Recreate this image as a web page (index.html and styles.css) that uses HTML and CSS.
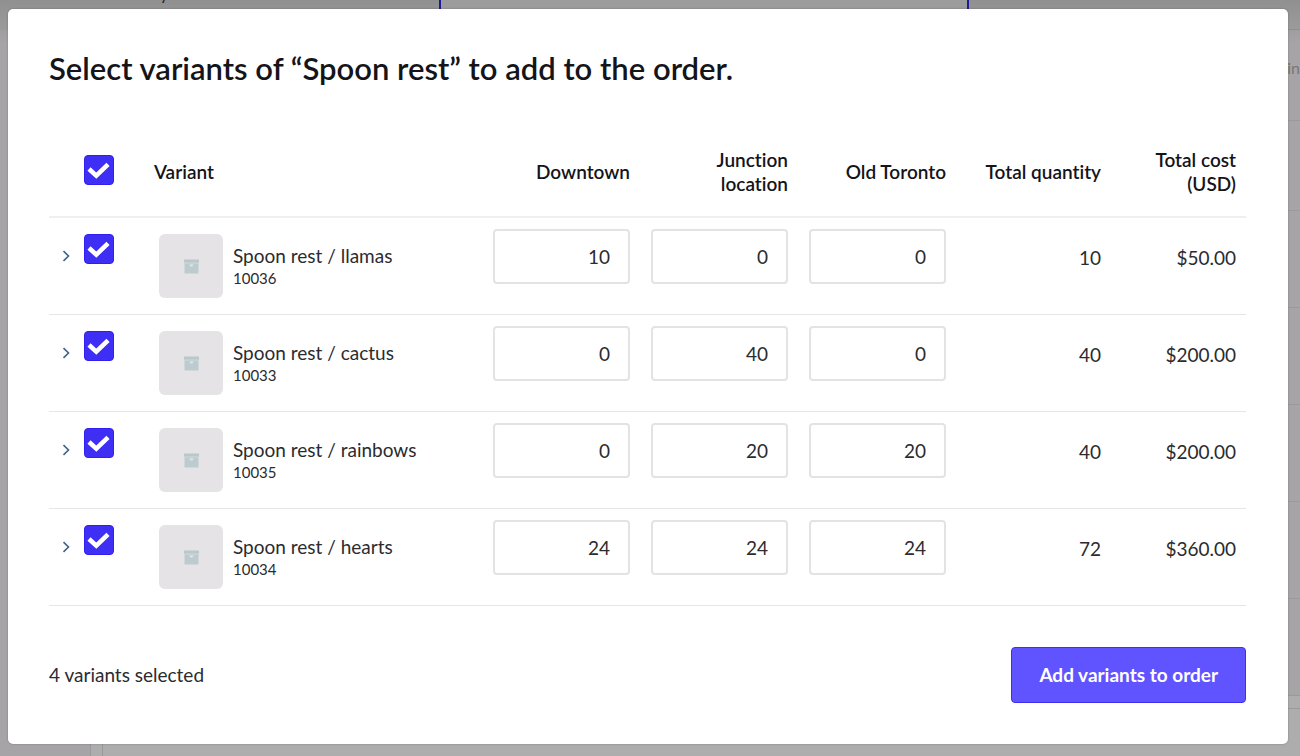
FILE: index.html
```
<!DOCTYPE html>
<html lang="en">
<head>
  <meta charset="UTF-8">
  <meta name="viewport" content="width=device-width, initial-scale=1.0">
  <title>Select variants</title>
  <link rel="stylesheet" href="styles.css">
</head>
<body>
  <!-- dimmed page behind the dialog -->
  <div class="page" aria-hidden="true">
    <div class="page-top">
      <div class="page-top-side"><span>y</span></div>
      <div class="page-top-main"></div>
      <div class="page-top-side"></div>
    </div>
    <div class="page-body">
      <div class="page-nav"></div>
      <div class="page-content">
        <div class="page-rows">
          <div class="page-row">in</div>
          <div class="page-row"></div>
          <div class="page-row"></div>
          <div class="page-row"></div>
          <div class="page-row"></div>
          <div class="page-row"></div>
          <div class="page-row"></div>
        </div>
        <div class="page-panel"></div>
      </div>
    </div>
  </div>

  <svg class="icons" width="0" height="0">
    <symbol id="chevron" viewBox="0 0 8 12">
      <path d="M1.5 1.2 6.5 6 1.5 10.8" fill="none" stroke="#3f6287" stroke-width="1.6"/>
    </symbol>
    <symbol id="box" viewBox="0 0 15 15">
      <path d="M0 .5h15v3.2H0z" fill="#b9c8cc"/>
      <path d="M.5 4.3h14V14.5H.5z" fill="#bccbce"/>
      <path d="M5.5 5.6h4v1h-1v.8h-2v-.8h-1z" fill="#e4e7ea"/>
    </symbol>
  </svg>

  <form class="modal" role="dialog" aria-labelledby="modal-title">
    <h1 id="modal-title">Select variants of “Spoon rest” to add to the order.</h1>

    <table class="variants">
      <colgroup>
        <col class="col-toggle">
        <col class="col-check">
        <col>
        <col class="col-location">
        <col class="col-location">
        <col class="col-location">
        <col class="col-quantity">
        <col class="col-cost">
      </colgroup>
      <thead>
        <tr>
          <td></td>
          <td class="check"><input type="checkbox" aria-label="Select all variants" checked></td>
          <th class="variant-head" scope="col">Variant</th>
          <th scope="col">Downtown</th>
          <th scope="col">Junction location</th>
          <th scope="col">Old Toronto</th>
          <th scope="col">Total quantity</th>
          <th scope="col">Total cost (USD)</th>
        </tr>
      </thead>
      <tbody>
        <tr>
          <td class="toggle"><button type="button" aria-label="Expand llamas"><svg><use href="#chevron"/></svg></button></td>
          <td class="check"><input type="checkbox" id="v-10036" checked></td>
          <td>
            <label class="variant" for="v-10036">
              <span class="thumb"><svg><use href="#box"/></svg></span>
              <span class="info"><span class="name">Spoon rest / llamas</span><span class="sku">10036</span></span>
            </label>
          </td>
          <td class="qty"><input type="text" aria-label="Llamas, Downtown" value="10"></td>
          <td class="qty"><input type="text" aria-label="Llamas, Junction location" value="0"></td>
          <td class="qty"><input type="text" aria-label="Llamas, Old Toronto" value="0"></td>
          <td class="total">10</td>
          <td class="total">$50.00</td>
        </tr>
        <tr>
          <td class="toggle"><button type="button" aria-label="Expand cactus"><svg><use href="#chevron"/></svg></button></td>
          <td class="check"><input type="checkbox" id="v-10033" checked></td>
          <td>
            <label class="variant" for="v-10033">
              <span class="thumb"><svg><use href="#box"/></svg></span>
              <span class="info"><span class="name">Spoon rest / cactus</span><span class="sku">10033</span></span>
            </label>
          </td>
          <td class="qty"><input type="text" aria-label="Cactus, Downtown" value="0"></td>
          <td class="qty"><input type="text" aria-label="Cactus, Junction location" value="40"></td>
          <td class="qty"><input type="text" aria-label="Cactus, Old Toronto" value="0"></td>
          <td class="total">40</td>
          <td class="total">$200.00</td>
        </tr>
        <tr>
          <td class="toggle"><button type="button" aria-label="Expand rainbows"><svg><use href="#chevron"/></svg></button></td>
          <td class="check"><input type="checkbox" id="v-10035" checked></td>
          <td>
            <label class="variant" for="v-10035">
              <span class="thumb"><svg><use href="#box"/></svg></span>
              <span class="info"><span class="name">Spoon rest / rainbows</span><span class="sku">10035</span></span>
            </label>
          </td>
          <td class="qty"><input type="text" aria-label="Rainbows, Downtown" value="0"></td>
          <td class="qty"><input type="text" aria-label="Rainbows, Junction location" value="20"></td>
          <td class="qty"><input type="text" aria-label="Rainbows, Old Toronto" value="20"></td>
          <td class="total">40</td>
          <td class="total">$200.00</td>
        </tr>
        <tr>
          <td class="toggle"><button type="button" aria-label="Expand hearts"><svg><use href="#chevron"/></svg></button></td>
          <td class="check"><input type="checkbox" id="v-10034" checked></td>
          <td>
            <label class="variant" for="v-10034">
              <span class="thumb"><svg><use href="#box"/></svg></span>
              <span class="info"><span class="name">Spoon rest / hearts</span><span class="sku">10034</span></span>
            </label>
          </td>
          <td class="qty"><input type="text" aria-label="Hearts, Downtown" value="24"></td>
          <td class="qty"><input type="text" aria-label="Hearts, Junction location" value="24"></td>
          <td class="qty"><input type="text" aria-label="Hearts, Old Toronto" value="24"></td>
          <td class="total">72</td>
          <td class="total">$360.00</td>
        </tr>
      </tbody>
    </table>

    <div class="footer">
      <span>4 variants selected</span>
      <button class="submit" type="submit">Add variants to order</button>
    </div>
  </form>
</body>
</html>
```
FILE: styles.css
```
* {
  box-sizing: border-box;
}
body {
  margin: 0;
  min-height: 100vh;
  display: grid;
  background: #a6a4a6;
  color: #2b2b30;
  font-family: Lato, sans-serif;
  font-size: 19px;
  font-variant-ligatures: none;
  line-height: 24px;
}
.page, .modal {
  grid-area: 1 / 1;
}

/* page behind */
.page {
  display: flex;
  flex-direction: column;
  background: linear-gradient(#919191, #a6a4a6 44px);
}
.page-top {
  display: flex;
  height: 30px;
}
.page-top-side {
  flex: 440;
  overflow: hidden;
  background: linear-gradient(#909090, #9b9b9b);
}
.page-top-side span {
  display: block;
  margin: -18px 0 0 160px;
  color: #222;
  font-size: 16px;
}
.page-top-side:last-child {
  flex: 332;
  border-bottom: 1px solid #8f8f8f;
}
.page-top-main {
  flex: 528;
  border: solid #1a1a9c;
  border-width: 0 2px;
  background: #9c9c9c;
}
.page-body {
  flex: 1;
  display: flex;
}
.page-nav {
  width: 103px;
  border-right: 1px solid #999;
  background: linear-gradient(90deg, transparent 90px, #999 90px, #999 91px, #adadad 91px);
}
.page-content {
  flex: 1;
  display: flex;
  flex-direction: column;
}
.page-row {
  height: 97px;
  border-bottom: 1px solid #9b999b;
}
.page-row:first-child {
  height: 91px;
  padding-top: 26px;
  color: #777;
  font-size: 16px;
  text-align: right;
}
.page-row:nth-child(2) {
  height: 90px;
}
.page-panel {
  flex: 1;
  border-top: 12px solid #adadad;
  background: #adadad;
  box-shadow: inset 0 1px #999;
}

/* dialog */
.icons {
  display: none;
}
.modal {
  align-self: start;
  margin: 9px 12px 12px 8px;
  padding: 39px 42px 41px 41px;
  background: #fff;
  border-radius: 5px;
  box-shadow: 0 0 2px rgba(0, 0, 0, 0.3);
}
h1 {
  margin: 0 0 40px;
  color: #141419;
  font-size: 31px;
  font-weight: 600;
  line-height: 40px;
}
.variants {
  width: 100%;
  table-layout: fixed;
  border-collapse: separate;
  border-spacing: 0;
}
.col-toggle {
  width: 35px;
}
.col-check {
  width: 60px;
}
.col-location {
  width: 158px;
}
.col-quantity {
  width: 155px;
}
.col-cost {
  width: 135px;
}
.variants th, .variants td {
  padding: 0 10px;
  border-bottom: 1px solid #e6e6e8;
  text-align: right;
}
.variants thead tr {
  height: 90px;
}
.variants th {
  color: #141419;
  font-weight: 600;
}
.variants thead th, .variants thead td {
  border-bottom-width: 2px;
  border-color: #efeff0;
}
.variants .variant-head {
  text-align: left;
}
.variants tbody tr {
  height: 97px;
}
.variants tbody td {
  vertical-align: top;
}
.variants .toggle {
  padding: 32px 0 0 13px;
  text-align: left;
}
.toggle button {
  display: block;
  padding: 0;
  border: 0;
  background: none;
  cursor: pointer;
}
.toggle svg {
  display: block;
  width: 8px;
  height: 12px;
}
.variants .check {
  padding: 0 0 4px;
  text-align: left;
}
.variants tbody .check {
  padding-top: 16px;
}
.check input {
  appearance: none;
  display: block;
  width: 30px;
  height: 30px;
  margin: 0;
  border: 1px solid #2f20f0;
  border-radius: 4px;
}
.check input:checked {
  background: #3f2ff5 url("data:image/svg+xml,%3Csvg xmlns='http://www.w3.org/2000/svg' viewBox='0 0 28 28'%3E%3Cpath d='M4 13 11.3 19.6 23 8.4' fill='none' stroke='white' stroke-width='4.6'/%3E%3C/svg%3E") center / 28px;
}
.variant {
  display: flex;
  gap: 10px;
  padding: 16px 0 0 5px;
  text-align: left;
}
.thumb {
  display: flex;
  align-items: center;
  justify-content: center;
  width: 64px;
  height: 64px;
  border-radius: 6px;
  background: #e5e3e6;
}
.thumb svg {
  width: 15px;
  height: 15px;
}
.info {
  display: flex;
  flex-direction: column;
  padding-top: 10px;
}
.sku {
  font-size: 15px;
  line-height: 20px;
}
.variants .qty {
  padding: 11px 10px 0 11px;
}
.qty input {
  display: block;
  width: 100%;
  height: 55px;
  padding: 0 18px;
  border: 2px solid #e3e3e6;
  border-radius: 4px;
  color: inherit;
  font: inherit;
  text-align: right;
}
.variants .total {
  padding-top: 28px;
}
.footer {
  display: flex;
  align-items: center;
  justify-content: space-between;
  margin-top: 41px;
}
.submit {
  padding: 15px 27px;
  border: 1px solid #3d2ef0;
  border-radius: 4px;
  background: #5f54ff;
  color: #fff;
  font: inherit;
  font-weight: 700;
  cursor: pointer;
}
```
